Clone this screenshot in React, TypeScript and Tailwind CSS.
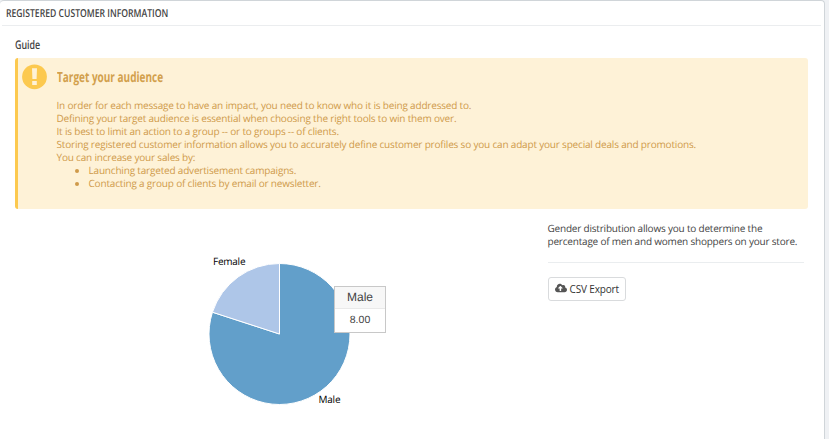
import { FaCloudUploadAlt } from "react-icons/fa";

function GuideAlert() {
  return (
    <section className="ml-[15px] flex h-[151px] w-[793px] rounded-[3px] border-l-[3px] border-[#fcc94f] bg-[#fef2d7] text-[#d2a04c]">
      <svg className="ml-1 mt-[6px] h-[26px] w-[25px] shrink-0" viewBox="0 0 25 26">
        <circle cx="12.5" cy="12.8" r="12.4" fill="#fcc94f" />
        <path d="M10 4.3h5l-.4 10.7h-4.2zM10.2 17h4.6v4h-4.6z" fill="#fef2d7" />
      </svg>
      <div className="ml-[9.5px]">
        <h4 className="mt-[10px] h-5 w-max origin-left scale-x-[0.715] whitespace-nowrap text-[14px] font-bold leading-5">
          Target your audience
        </h4>
        <div className="mt-[11px] whitespace-nowrap text-[10px] font-medium leading-[13px] tracking-[-0.185px] text-[#cf9a4a]">
          <p>In order for each message to have an impact, you need to know who it is being addressed to.</p>
          <p>Defining your target audience is essential when choosing the right tools to win them over.</p>
          <p>It is best to limit an action to a group -- or to groups -- of clients.</p>
          <p>Storing registered customer information allows you to accurately define customer profiles so you can adapt your special deals and promotions.</p>
          <p>You can increase your sales by:</p>
          <ul className="list-disc pl-8">
            <li>Launching targeted advertisement campaigns.</li>
            <li>Contacting a group of clients by email or newsletter.</li>
          </ul>
        </div>
      </div>
    </section>
  );
}

function GenderChart() {
  return (
    <div className="relative h-[217px] w-[532.5px]">
      <svg className="block h-[217px] w-[533px]" viewBox="0 0 533 217">
        <g stroke="#fff" strokeWidth="1" strokeLinejoin="round">
          <path d="M264.5 112V41.5A70.5 70.5 0 1 1 197.45 90.21Z" fill="#629fca" />
          <path d="M264.5 112L197.45 90.21A70.5 70.5 0 0 1 264.5 41.5Z" fill="#aec6e8" />
        </g>
        <g className="text-[10px]" fill="#000">
          <text x="198" y="43" textLength="32.5">Female</text>
          <text x="303.5" y="181" textLength="22">Male</text>
        </g>
      </svg>
      <div className="absolute left-[319px] top-[64px] h-[47px] w-[52px] border border-[#c8c8c8] bg-white text-center font-['Liberation_Sans',Arial,sans-serif] text-[#444]">
        <div className="h-[22px] border-b border-[#e9e9e9] bg-[#f7f7f7] text-[12px] leading-[21px]">Male</div>
        <div className="text-[10.5px] leading-[22px]">8.00</div>
      </div>
    </div>
  );
}

export default function App() {
  return (
    <div className="h-[439px] w-[829px] overflow-hidden bg-[#eff1f4] font-['Open_Sans',sans-serif] [text-rendering:geometricPrecision]">
      <main className="h-[445px] w-[825px] rounded-[4px] border-r border-t border-[#d0d5d9] bg-white">
        <header className="ml-[2px] h-[25px] w-[819px] border-b border-[#ebedef]">
          <h3 className="ml-1 w-max origin-left scale-x-[0.784] text-[11px] font-semibold leading-[25px] text-[#444]">
            REGISTERED CUSTOMER INFORMATION
          </h3>
        </header>
        <h4 className="ml-[15px] mt-[10px] h-[22px] w-max origin-left scale-x-[0.74] text-[12px] font-semibold leading-[18px] text-[#444]">
          Guide
        </h4>
        <GuideAlert />
        <div className="ml-[15px] mt-[13px] flex">
          <GenderChart />
          <aside className="w-[256px] text-[10px] leading-[13px] text-[#444]">
            <p className="whitespace-nowrap tracking-[-0.2px]">
              Gender distribution allows you to determine the<br />
              percentage of men and women shoppers on your store.
            </p>
            <hr className="mt-[14px] border-[#eaedef]" />
            <button className="mt-[14px] flex h-6 w-[78px] items-center rounded-[3px] border border-[#d9dbdd] bg-white pl-[6px] text-[10px] text-[#333]">
              <FaCloudUploadAlt className="mr-[3px] size-3 shrink-0 -translate-y-px text-[#555]" />
              <span className="whitespace-nowrap tracking-[-0.15px]">CSV Export</span>
            </button>
          </aside>
        </div>
      </main>
    </div>
  );
}
